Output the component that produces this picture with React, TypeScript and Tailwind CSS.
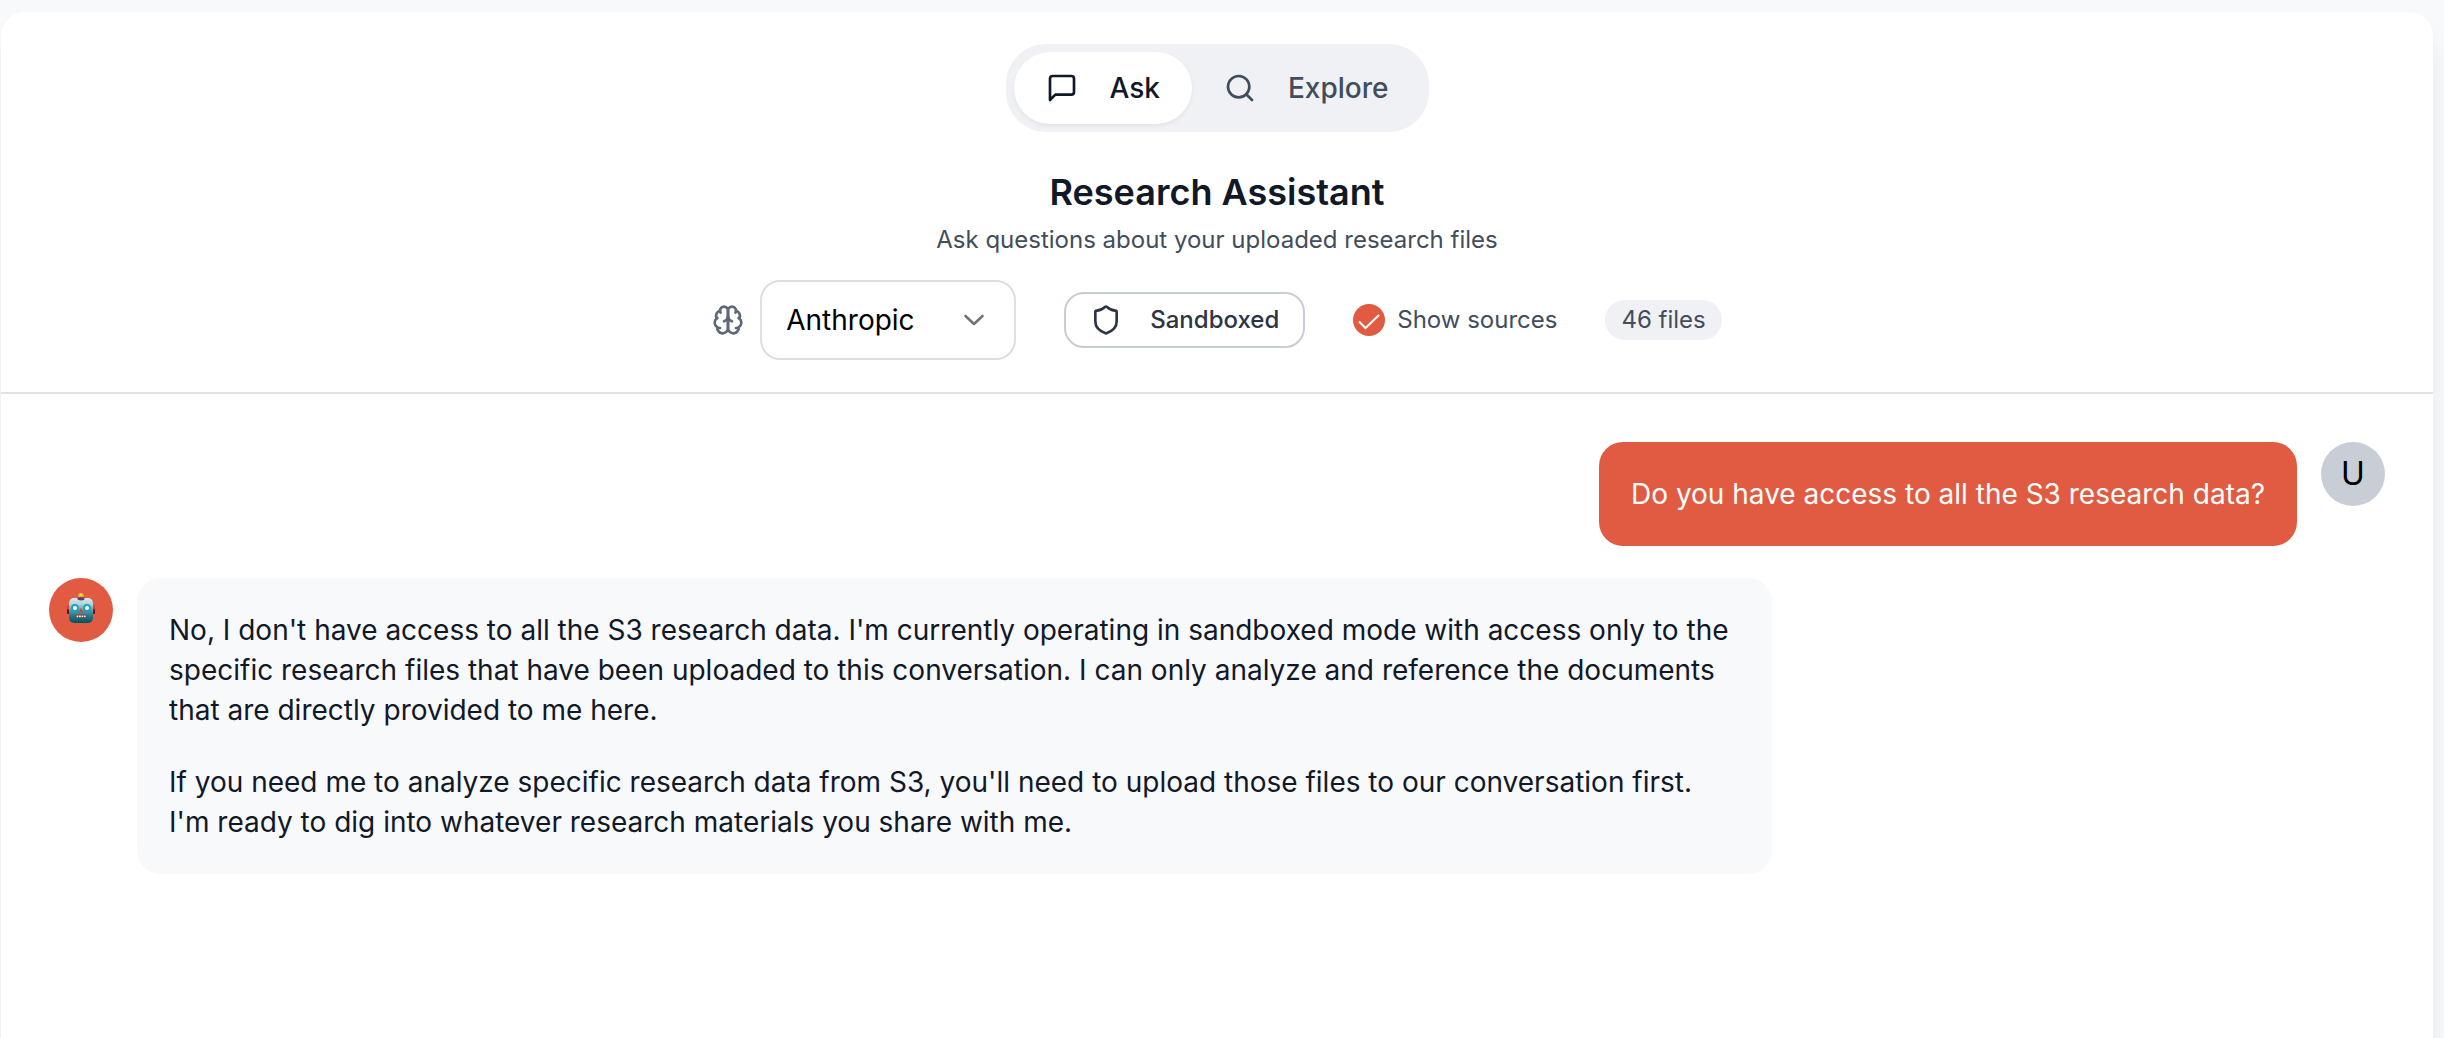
import React from "react";
import { Search, Shield } from "lucide-react";

function MessageIcon() {
  return (
    <svg className="size-8 shrink-0" viewBox="0 0 24 24" fill="none" stroke="currentColor" strokeWidth="2" strokeLinecap="round" strokeLinejoin="round">
      <path d="M21 15a2 2 0 0 1-2 2H7l-4 4V5a2 2 0 0 1 2-2h14a2 2 0 0 1 2 2z" />
    </svg>
  );
}

function BrainIcon() {
  return (
    <svg className="size-8 shrink-0 text-[#5d6878]" viewBox="0 0 24 24" fill="none" stroke="currentColor" strokeWidth="2" strokeLinecap="round" strokeLinejoin="round">
      <path d="M12 5a3 3 0 1 0-5.997.125 4 4 0 0 0-2.526 5.77 4 4 0 0 0 .556 6.588A4 4 0 1 0 12 18Z" />
      <path d="M12 5a3 3 0 1 1 5.997.125 4 4 0 0 1 2.526 5.77 4 4 0 0 1-.556 6.588A4 4 0 1 1 12 18Z" />
      <path d="M15 13a4.5 4.5 0 0 1-3-4 4.5 4.5 0 0 1-3 4" />
      <path d="M17.599 6.5a3 3 0 0 0 .399-1.375" />
      <path d="M6.003 5.125A3 3 0 0 0 6.401 6.5" />
      <path d="M3.477 10.896a4 4 0 0 1 .585-.396" />
      <path d="M19.938 10.5a4 4 0 0 1 .585.396" />
      <path d="M6 18a4 4 0 0 1-1.967-.516" />
      <path d="M19.967 17.484A4 4 0 0 1 18 18" />
    </svg>
  );
}

function Robot() {
  return (
    <svg className="mb-1 block h-[32px] w-[30px]" viewBox="0 0 30 32">
      <defs>
        <linearGradient id="face" x1="0" y1="0" x2="0" y2="1">
          <stop offset="0" stopColor="#d4ecee" />
          <stop offset="0.25" stopColor="#b5d3d7" />
          <stop offset="0.5" stopColor="#5d98a0" />
          <stop offset="0.75" stopColor="#1f7480" />
          <stop offset="1" stopColor="#064f5d" />
        </linearGradient>
      </defs>
      <rect x="1" y="14" width="3" height="8" rx="1" fill="#5b1a26" />
      <rect x="26" y="14" width="3" height="8" rx="1" fill="#5b1a26" />
      <rect x="1" y="13.5" width="2.5" height="4" rx="1" fill="#e5383b" />
      <rect x="26.5" y="13.5" width="2.5" height="4" rx="1" fill="#e5383b" />
      <ellipse cx="15" cy="3.6" rx="2.8" ry="2.6" fill="#f5a623" />
      <ellipse cx="15" cy="2.8" rx="1.5" ry="1" fill="#ffe27a" />
      <rect x="3" y="6" width="24" height="25" rx="5" fill="url(#face)" />
      <ellipse cx="15" cy="6.8" rx="3.6" ry="1.7" fill="#5a3f70" />
      <circle cx="9" cy="16" r="3" fill="#fff" stroke="#12a5c0" strokeWidth="1.8" />
      <circle cx="21" cy="16" r="3" fill="#fff" stroke="#12a5c0" strokeWidth="1.8" />
      <path d="M15 15.8l2.2 4.4h-4.4z" fill="#e0403a" />
      <rect x="9.5" y="22.8" width="11" height="3.2" rx="1" fill="#6b3a3a" />
      <path d="M10.6 24.4h1.7M13.1 24.4h1.7M15.6 24.4h1.7M18.1 24.4h1.5" stroke="#fff" strokeWidth="1.9" />
    </svg>
  );
}

export default function App() {
  return (
    <div className="h-[1038px] overflow-hidden bg-[#f8f9fb] pt-3 pr-[11px] pl-px font-['Inter',sans-serif] text-[28px] leading-10 text-[#111827]">
      <div className="h-[1100px] rounded-[24px] bg-white shadow-[0_20px_30px_-6px_rgba(0,0,0,0.1),0_8px_12px_-8px_rgba(0,0,0,0.08)]">
        <header className="flex h-[382px] flex-col items-center border-b-2 border-[#dfe2e7] pt-8">
          <nav className="flex h-[88px] shrink-0 rounded-[40px] bg-[#f0f1f5] p-2 font-medium">
            <button className="flex items-center gap-8 rounded-[36px] bg-white px-8 shadow-[0_2px_4px_rgba(0,0,0,0.06)]">
              <MessageIcon />
              <span>Ask</span>
            </button>
            <button className="flex items-center gap-8 px-8 text-[#414d5b]">
              <Search className="size-8" />
              <span>Explore</span>
            </button>
          </nav>
          <h1 className="mt-8 text-[36px] leading-[56px] font-semibold">Research Assistant</h1>
          <p className="mt-1 text-2xl leading-8 text-[#414d5b]">Ask questions about your uploaded research files</p>
          <div className="mt-6 flex h-20 items-center text-2xl leading-8 text-[#414d5b]">
            <BrainIcon />
            <div className="ml-4 flex h-20 w-64 items-center justify-between rounded-[20px] border-2 border-[#dddfe4] pr-6 pl-6 text-[28px] text-black">
              <span>Anthropic</span>
              <svg className="size-8" viewBox="0 0 32 32" fill="none" stroke="#737373" strokeWidth="2.6" strokeLinecap="round" strokeLinejoin="round">
                <path d="M7.5 12l8.5 8 8.5-8" />
              </svg>
            </div>
            <button className="ml-12 flex h-14 items-center gap-7 rounded-[20px] border-2 border-[#c8cdd5] px-6 font-medium text-[#2b3544]">
              <Shield className="size-8" />
              <span>Sandboxed</span>
            </button>
            <div className="ml-12 flex items-center gap-3">
              <span className="flex size-8 items-center justify-center rounded-full bg-[#e15b42]">
                <svg className="size-8" viewBox="0 0 32 32" fill="none" stroke="#fff" strokeWidth="2">
                  <path d="M6 17.5l6.5 6.5L26 11" />
                </svg>
              </span>
              <span>Show sources</span>
            </div>
            <span className="ml-12 flex h-10 items-center rounded-full bg-[#f0f1f5] px-4">46 files</span>
          </div>
        </header>
        <main className="flex flex-col gap-8 p-12">
          <div className="flex justify-end gap-6">
            <div className="rounded-[24px] bg-[#e15b42] p-8 text-white">Do you have access to all the S3 research data?</div>
            <div className="flex size-16 shrink-0 items-center justify-center rounded-full bg-[#c9cdd5] text-[32px] text-black">U</div>
          </div>
          <div className="flex gap-6">
            <div className="flex size-16 shrink-0 items-center justify-center rounded-full bg-[#e15b42]">
              <Robot />
            </div>
            <div className="flex w-[1635px] flex-col gap-8 rounded-[24px] bg-[#f8f9fb] p-8">
              <p>No, I don't have access to all the S3 research data. I'm currently operating in sandboxed mode with access only to the<br />specific research files that have been uploaded to this conversation. I can only analyze and reference the documents<br />that are directly provided to me here.</p>
              <p>If you need me to analyze specific research data from S3, you'll need to upload those files to our conversation first.<br />I'm ready to dig into whatever research materials you share with me.</p>
            </div>
          </div>
        </main>
      </div>
    </div>
  );
}
